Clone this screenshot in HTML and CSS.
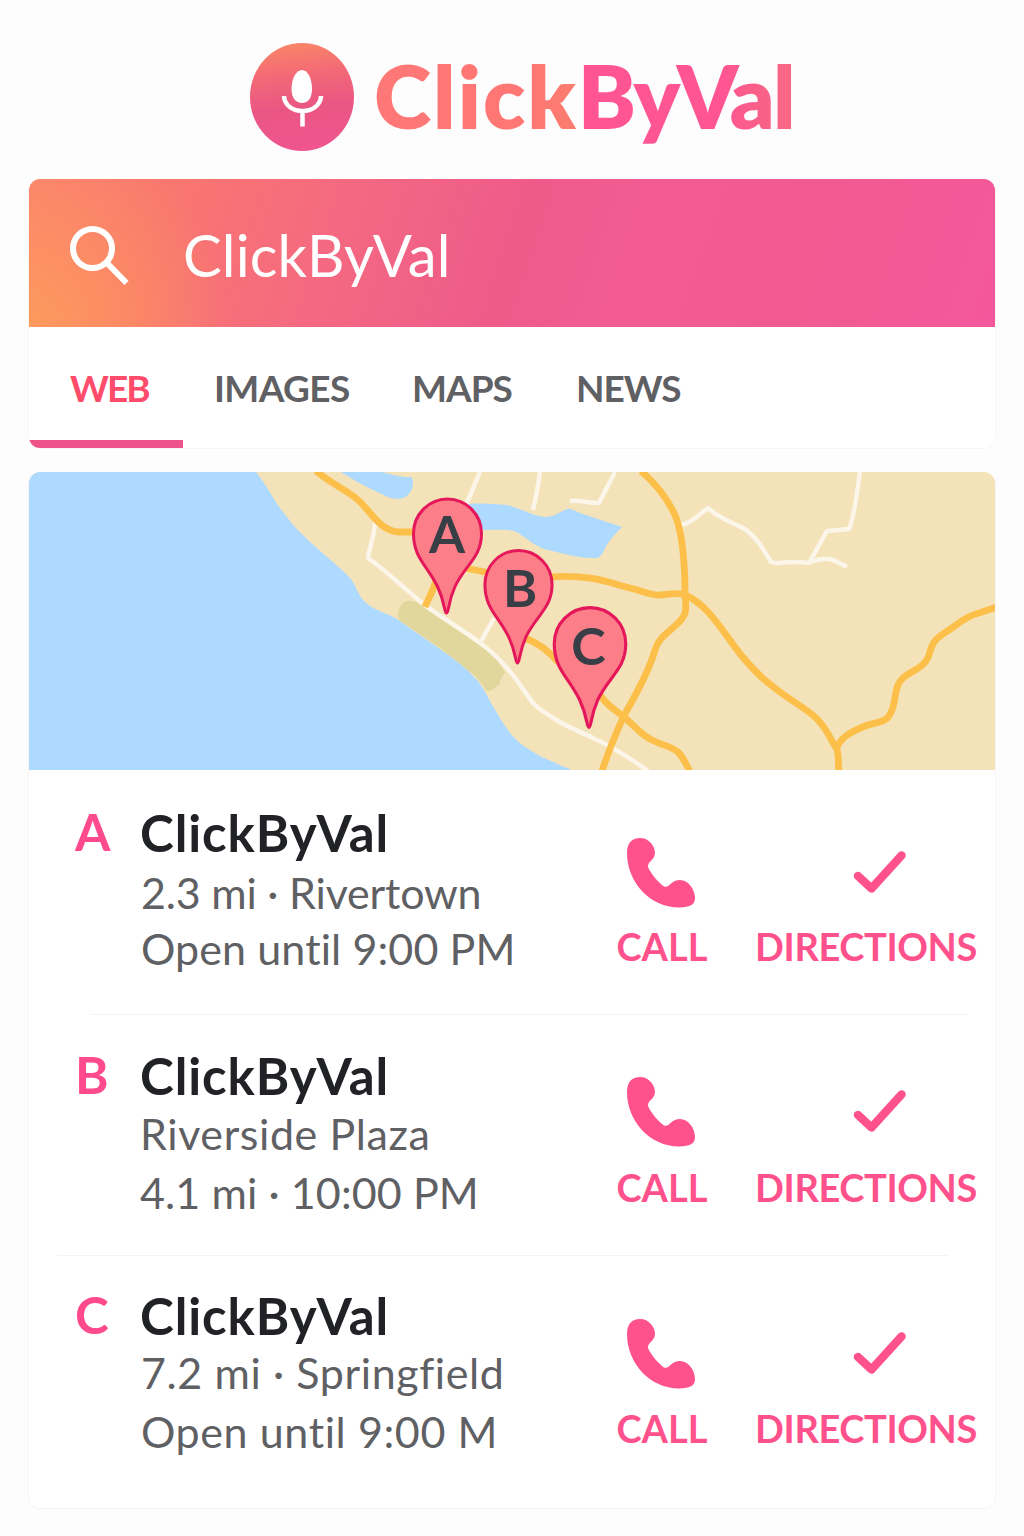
FILE: index.html
```html
<!DOCTYPE html>
<html lang="en">

<head>
    <meta charset="UTF-8">
    <meta name="viewport" content="width=device-width, initial-scale=1.0">
    <title>ClickByVal</title>
    <link rel="stylesheet" href="styles.css">
</head>

<body>
    <!-- shared icons -->
    <svg class="sprite" width="0" height="0">
        <symbol id="phone" viewBox="0 0 70 70">
            <path d="M0 15 C0 5 5 0 13 0 C22 0 28 8 28 15 C28 22 20.500 23 21 29 C24 36 31 44 37 48.500 C43 50 44 42 53 42 C61 42 68 51 68 60 C68 66 64 69.500 52 69.500 C23 69.500 0 44 0 15 Z" />
        </symbol>
        <symbol id="check" viewBox="0 0 54 44">
            <path d="M5 25 L18.500 37.500 L48.500 4.500" />
        </symbol>
        <symbol id="pin" viewBox="0 0 70 118" overflow="visible">
            <path d="M34 115.500 C31.500 115 33 106 25 89 C14 67 1 60 1 36 A34 34.500 0 0 1 69 36 C69 60 53 67 42.500 89 C35 106 36.500 115 34 115.500 Z" />
        </symbol>
    </svg>

    <header class="logo">
        <svg class="logo-icon" viewBox="0 0 104 108">
            <defs>
                <linearGradient id="logoFill" x1="0.45" y1="0" x2="0.55" y2="1">
                    <stop offset="0" stop-color="#f98468" />
                    <stop offset="0.3" stop-color="#f36877" />
                    <stop offset="0.6" stop-color="#ea5684" />
                    <stop offset="1" stop-color="#f0558f" />
                </linearGradient>
            </defs>
            <ellipse cx="52" cy="54" rx="52" ry="54" fill="url(#logoFill)" />
            <path d="M52 27 C58 27 62 36 62 46 C62 55 58 60 52 60 C46 60 41.500 55 41.500 46 C41.500 36 46 27 52 27 Z" fill="#fff" />
            <path d="M34 53 C35 73 70 73 71 53 M52.500 68 V83.500" fill="none" stroke="#fff" stroke-width="4.500" />
        </svg>
        <h1 class="logo-text"><span class="click">Click</span><span class="by-val">ByVal</span></h1>
    </header>

    <section class="card search">
        <div class="search-bar">
            <svg class="search-icon" viewBox="0 0 60 60">
                <circle cx="22.500" cy="22.500" r="19.500" />
                <path d="M36 36 L56.500 57" />
            </svg>
            <span class="query">ClickByVal</span>
        </div>
        <nav class="tabs">
            <a class="tab active">WEB</a>
            <a class="tab images">IMAGES</a>
            <a class="tab maps">MAPS</a>
            <a class="tab news">NEWS</a>
        </nav>
    </section>

    <section class="card results">
        <svg class="map" viewBox="29 472 967 298">
            <rect class="land" x="29" y="472" width="967" height="298" />
            <!-- water -->
            <path class="water" d="M29 472 H256 C266 484 273 499 283 512 C290 521 296 529 303 535 C320 552 338 565 350 578 C358 588 357 594 365 602 C373 610 385 612 397 619 L447 654 C457 661 466 668 474 677 C485 688 488 699 493 706 C501 720 508 733 520 743 C535 755 553 762 572 770 H29 Z" />
            <path class="water" d="M341 472 C352 479 362 485 373 490 C382 494 389 499 399 499 C409 498 413 489 413 483 C413 479 412 477 411 477 C401 478 392 474 381 472 Z" />
            <path class="water" d="M463 505 C478 502 493 504 507 505 C521 508 532 516 545 517 C556 517 560 511 567 509 C571 508 575 511 580 513 L622 527 C617 532 612 537 608 543 C604 549 602 557 597 558 C580 559 562 553 544 549 C533 545 526 537 514 531 C504 529 490 530 475 530 Z" />
            <path class="beach" d="M398 613 C400 603 406 600 411 601 C418 601 424 607 431 611 L481 643 C490 650 499 661 505 673 C502 677 499 680 500 684 C495 687 492 692 487 691 C482 684 477 677 469 671 C457 661 445 651 434 644 L399 620 Z" />
            <!-- small roads -->
            <g class="road">
                <path d="M375 522 C375 535 369 548 368 558 C384 569 404 588 422 603 C440 617 462 629 480 643 C490 650 500 660 507 668 C517 679 525 693 534 704 C541 711 550 716 560 722 C571 729 582 732 593 738 C613 747 630 758 648 771" />
                <path d="M480 643 L494 618" />
                <path d="M480 472 L466 505" />
                <path d="M540 472 C538 486 536 498 533 510" />
                <path d="M615 472 L599 503 C590 503 580 500 570 501" />
                <path d="M682 525 C695 521 700 513 708 508 C718 518 731 522 743 528 C756 536 764 550 771 562 C778 565 783 560 809 563 L827 531 L849 529 C855 514 857 492 860 472" />
                <path d="M811 562 C822 558 830 558 835 561 L847 567" />
            </g>
            <!-- main roads -->
            <g class="highway">
                <path d="M316 471 C330 483 345 489 357 499 C369 509 378 529 397 532 L420 532" />
                <path d="M436 580 C434 590 428 599 425 607" />
                <path d="M465 568 L490 573" />
                <path d="M550 577 C590 574 610 583 630 588 C644 591 650 596 661 595 C670 594 678 592 685 595 C708 604 724 634 741 655 C751 667 760 677 771 685 C786 698 806 708 816 718 C827 728 831 741 837 749 C839 758 838 766 839 771" />
                <path d="M641 471 C655 483 668 500 675 515 C682 532 685 560 685 595 C687 612 686 616 676 625 C665 635 659 638 655 650 C650 668 638 691 626 712 C616 732 609 750 602 771" />
                <path d="M525 638 C538 643 549 651 558 662" />
                <path d="M600 695 C608 707 616 710 625 718 C635 726 640 734 652 740 C662 745 672 747 678 752 C684 758 686 765 690 771" />
                <path d="M837 747 C842 736 853 731 865 726 C875 722 885 723 889 716 C898 703 892 687 904 677 C915 669 925 667 929 655 C932 644 934 640 943 634 C960 623 966 616 982 612 L997 607" />
            </g>
            <!-- pins -->
            <g class="pin">
                <use href="#pin" x="412.500" y="497.500" width="70" height="118" />
                <text x="447" y="553">A</text>
                <use href="#pin" x="483" y="549" width="71" height="116.500" />
                <text x="520" y="607">B</text>
                <use href="#pin" x="553" y="606" width="74" height="124" />
                <text x="588.500" y="665">C</text>
            </g>
        </svg>

        <div class="item item-a">
            <span class="letter">A</span>
            <div class="info">
                <h2 class="name">ClickByVal</h2>
                <p class="place">2.3 mi · Rivertown</p>
                <p class="hours">Open until 9:00 PM</p>
            </div>
            <a class="action call"><svg class="icon"><use href="#phone" /></svg><span>CALL</span></a>
            <a class="action directions"><svg class="icon"><use href="#check" /></svg><span>DIRECTIONS</span></a>
        </div>
        <div class="item item-b">
            <span class="letter">B</span>
            <div class="info">
                <h2 class="name">ClickByVal</h2>
                <p class="place">Riverside Plaza</p>
                <p class="hours">4.1 mi · 10:00 PM</p>
            </div>
            <a class="action call"><svg class="icon"><use href="#phone" /></svg><span>CALL</span></a>
            <a class="action directions"><svg class="icon"><use href="#check" /></svg><span>DIRECTIONS</span></a>
        </div>
        <div class="item item-c">
            <span class="letter">C</span>
            <div class="info">
                <h2 class="name">ClickByVal</h2>
                <p class="place">7.2 mi · Springfield</p>
                <p class="hours">Open until 9:00 M</p>
            </div>
            <a class="action call"><svg class="icon"><use href="#phone" /></svg><span>CALL</span></a>
            <a class="action directions"><svg class="icon"><use href="#check" /></svg><span>DIRECTIONS</span></a>
        </div>
    </section>
</body>

</html>
```

FILE: styles.css
```css
* {
    margin: 0;
    padding: 0;
    box-sizing: border-box;
}

body {
    width: 1024px;
    height: 1536px;
    padding: 0 28px;
    overflow: hidden;
    background: #fdfdfd;
    color: #5f6063;
    font-family: Lato, "Open Sans", sans-serif;
    font-variant-ligatures: none;
}

.sprite {
    position: absolute;
}

/* logo */
.logo {
    height: 179px;
    padding: 43px 0 0 222px;
    display: flex;
    align-items: flex-start;
}

.logo-icon {
    width: 104px;
    height: 108px;
}

.logo-text {
    margin-left: 20px;
    padding-top: 1px;
    display: flex;
    font-size: 87px;
    line-height: 104px;
    font-weight: 800;
    white-space: nowrap;
}

.click,
.by-val {
    background: linear-gradient(90deg, #ff7777 0, #ff7674 70%, #fb7d6f 100%);
    -webkit-background-clip: text;
    background-clip: text;
    color: transparent;
}

.click {
    letter-spacing: 2px;
}

.by-val {
    padding-right: 6px;
    letter-spacing: -1.8px;
    background-image: linear-gradient(90deg, #ff5592 0, #ff5592 64%, #f86287 85%, #fb6a88 100%);
}

/* cards */
.card {
    background: #fff;
    border: 1px solid #f7f6f5;
    border-top: none;
    border-radius: 12px;
    overflow: hidden;
}

.search-bar {
    height: 148px;
    padding-left: 41px;
    display: flex;
    align-items: center;
    background:
        radial-gradient(circle at 0 100%, #fd9a5c 0, rgba(253, 150, 96, 0) 200px),
        linear-gradient(108deg, #fb8070 0, #f9776f 14%, #f46882 33%, #ee5b8a 50%, #f25c93 62%, #f15a91 80%, #f4589c 100%);
}

.search-icon {
    width: 60px;
    height: 60px;
    margin-top: 5px;
    fill: none;
    stroke: #fff;
    stroke-width: 6;
}

.query {
    margin: 2px 0 0 53px;
    color: #fff;
    font-size: 58px;
    letter-spacing: 0.1px;
}

.tabs {
    height: 121px;
    display: flex;
    font-size: 37px;
    font-weight: 700;
    line-height: 112px;
    letter-spacing: -1px;
}

.tab {
    padding-top: 5px;
}

.tab.active {
    width: 154px;
    padding-left: 41px;
    color: #ff4c6b;
    border-bottom: 8px solid #ee5489;
    letter-spacing: -2px;
}

.images {
    margin-left: 31px;
    width: 198px;
    letter-spacing: -0.6px;
}

.maps {
    width: 164px;
}

.results {
    height: 1037px;
    margin-top: 23px;
}

/* map */
.map {
    display: block;
    width: 967px;
    height: 298px;
}

.land {
    fill: #f4e2b8;
}

.water {
    fill: #aedaff;
}

.beach {
    fill: #e1d79d;
}

.road {
    fill: none;
    stroke: #fcf6ea;
    stroke-width: 4.5;
    stroke-linejoin: round;
}

.highway {
    fill: none;
    stroke: #fcc04a;
    stroke-width: 6.8;
}

.pin {
    fill: #fc7e88;
    stroke: #e5175b;
    stroke-width: 3;
}

.pin text {
    fill: #383e45;
    stroke: none;
    font-size: 52px;
    font-weight: 700;
    text-anchor: middle;
}

/* result rows */
.item {
    height: 241px;
    padding-left: 46px;
    display: grid;
    grid-template-columns: 66px 475px 92px 220px;
    background: linear-gradient(#f3f3f3, #f3f3f3) no-repeat bottom;
    background-size: 0 1px;
}

.item-a {
    height: 245px;
    padding-top: 33px;
    background-size: 878px 1px;
    background-position: 61px 100%;
}

.item-b {
    padding-top: 31px;
    background-size: 891px 1px;
    background-position: 28px 100%;
}

.item-c {
    padding-top: 30px;
}

.letter {
    padding-top: 1px;
    color: #ff4a8d;
    font-size: 51px;
    line-height: 56px;
    font-weight: 700;
}

.name {
    height: 60px;
    margin-left: -1px;
    color: #202226;
    font-size: 51px;
    line-height: 60px;
    font-weight: 700;
    letter-spacing: 0.9px;
}

.place,
.hours {
    font-size: 43px;
    line-height: 56px;
    white-space: nowrap;
}

.item-a .place {
    margin-top: 2px;
    letter-spacing: -0.2px;
}

.item-a .hours {
    letter-spacing: 0.1px;
}

.item-b .place {
    margin-left: -1px;
    letter-spacing: 0.6px;
}

.item-b .hours {
    margin: 3px 0 0 -1px;
    letter-spacing: 0.1px;
}

.item-c .place {
    margin-top: -1px;
    letter-spacing: 0.6px;
}

.item-c .hours {
    margin-top: 3px;
    letter-spacing: 0.6px;
}

/* actions */
.action {
    padding-top: 35px;
    display: flex;
    flex-direction: column;
    align-items: center;
    color: #ff528c;
    font-size: 38px;
    line-height: 46px;
    font-weight: 700;
}

.item-b .action {
    padding-top: 31px;
}

.item-c .action {
    padding-top: 33px;
}

.icon {
    width: 70px;
    height: 70px;
    margin-bottom: 15px;
    fill: #ff528c;
}

.item-b .icon {
    margin-bottom: 17px;
}

.item-c .icon {
    margin-bottom: 16px;
}

.directions {
    margin-left: 48px;
    margin-right: -48px;
    letter-spacing: -0.4px;
}

.directions .icon {
    width: 54px;
    margin-left: 27px;
    fill: none;
    stroke: #ff528c;
    stroke-width: 8.5;
    stroke-linecap: round;
    stroke-linejoin: round;
}
```
